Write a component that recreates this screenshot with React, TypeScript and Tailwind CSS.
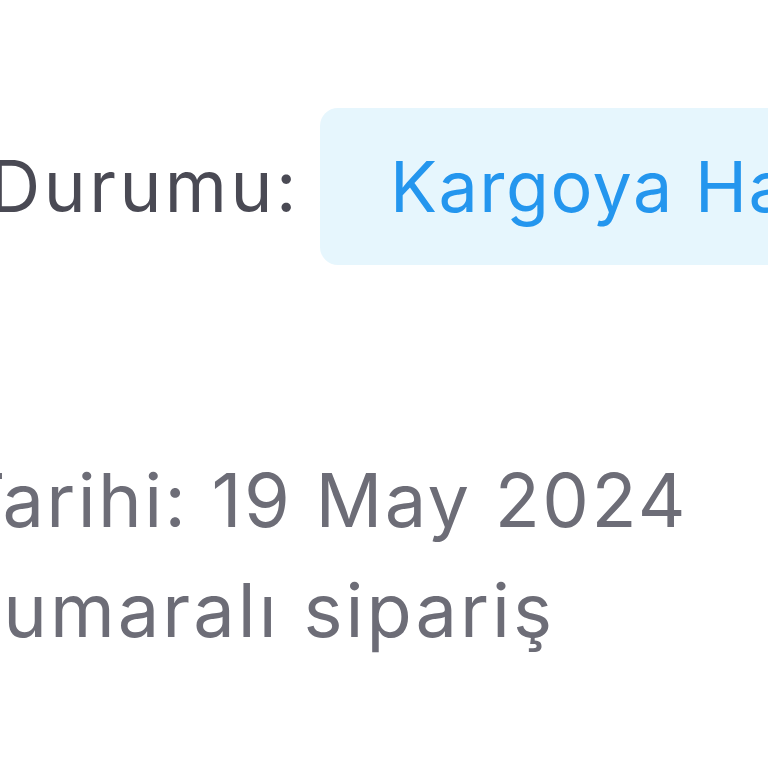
import React from 'react';

const font = { fontFamily: '"Inter", "Noto Sans", sans-serif' };

export default function App() {
  return (
    <div className="w-[768px] h-[768px] overflow-hidden bg-white" style={font}>
      {/* Status row */}
      <div className="flex items-center pt-[108px]">
        <div className="w-[300px] shrink-0 overflow-hidden flex justify-end">
          <span className="whitespace-nowrap text-[71px] leading-none text-[#4a4a54] tracking-[3.5px]">
            Sipariş Durumu:
          </span>
        </div>
        <div className="ml-[20px] h-[157px] shrink-0 rounded-[18px] bg-[#e6f6fd] pl-[70px] pr-[60px] flex items-center">
          <span className="whitespace-nowrap text-[70px] leading-none text-[#2496ee] tracking-[1.5px]">
            Kargoya Hazırlanıyor
          </span>
        </div>
      </div>

      {/* Order info */}
      <div className="mt-[180px] flex flex-col text-[74px] leading-[110px] text-[#6d6d77]">
        <div className="w-[688px] overflow-hidden flex justify-end tracking-[2.4px]">
          <span className="whitespace-nowrap">Sipariş Tarihi: 19 May 2024</span>
        </div>
        <div className="w-[555px] overflow-hidden flex justify-end tracking-[3px]">
          <span className="whitespace-nowrap">123456 numaralı sipariş</span>
        </div>
      </div>
    </div>
  );
}
